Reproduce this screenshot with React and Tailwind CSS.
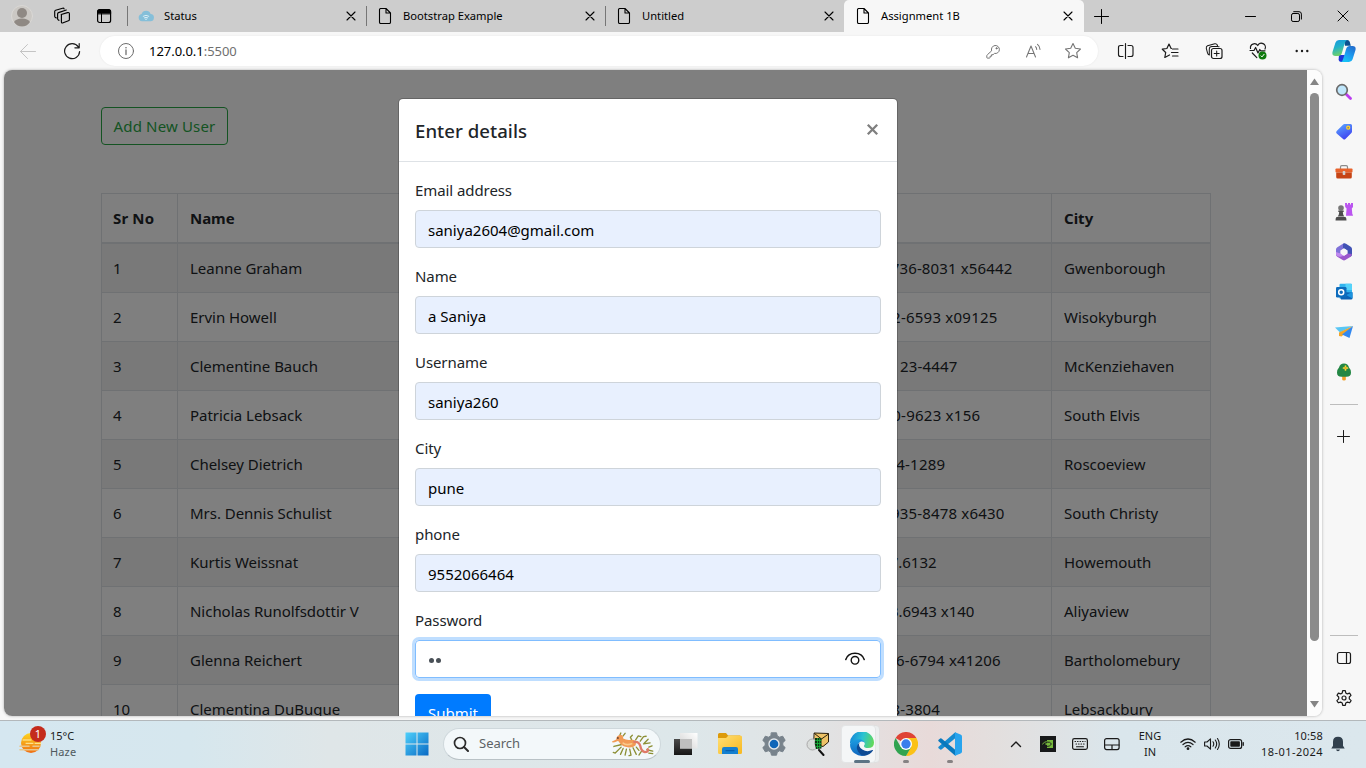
import React from "react";

const users = [
  ["1", "Leanne Graham", "1-770-736-8031 x56442", "Gwenborough", "pl-[15px] tracking-[0.13px]"],
  ["2", "Ervin Howell", "010-692-6593 x09125", "Wisokyburgh", "tracking-[0.23px]"],
  ["3", "Clementine Bauch", "1-463-123-4447", "McKenziehaven", "pl-[15px] tracking-[0.19px]"],
  ["4", "Patricia Lebsack", "493-170-9623 x156", "South Elvis", "tracking-[0.25px]"],
  ["5", "Chelsey Dietrich", "(254)954-1289", "Roscoeview", "tracking-[0.2px]"],
  ["6", "Mrs. Dennis Schulist", "1-477-935-8478 x6430", "South Christy", "pl-[15px] tracking-[0.17px]"],
  ["7", "Kurtis Weissnat", "210.067.6132", "Howemouth", "tracking-[-0.03px]"],
  ["8", "Nicholas Runolfsdottir V", "586.493.6943 x140", "Aliyaview", "tracking-[0px]"],
  ["9", "Glenna Reichert", "(775)976-6794 x41206", "Bartholomebury", "tracking-[0.17px]"],
  ["10", "Clementina DuBuque", "024-648-3804", "Lebsackbury", "tracking-[0.13px]"],
];

const fields = [
  ["Email address", "saniya2604@gmail.com"],
  ["Name", "a Saniya"],
  ["Username", "saniya260"],
  ["City", "pune"],
  ["phone", "9552066464"],
];

function Icon({ className = "size-4", box = "0 0 16 16", children }) {
  return (
    <svg className={`shrink-0 ${className}`} viewBox={box} fill="none" stroke="currentColor" strokeWidth="1" strokeLinecap="round" strokeLinejoin="round">
      {children}
    </svg>
  );
}

const CloseX = () => (
  <Icon className="size-2.5 text-black" box="0 0 10 10">
    <path d="M1 1l8 8M9 1l-8 8" strokeWidth="1.1" />
  </Icon>
);

const PageIcon = () => (
  <Icon className="size-4 text-black">
    <path d="M3.8.5H9l4.5 4.5v9.200a1.300 1.300 0 0 1-1.300 1.300H3.800a1.300 1.300 0 0 1-1.300-1.300V1.800A1.300 1.300 0 0 1 3.800.5zM9 .7V5h4.300" strokeWidth="1.100" />
  </Icon>
);

const CloudIcon = () => (
  <Icon className="size-4">
    <path d="M4 13.200a3.700 3.700 0 0 1-.4-7.300A4.800 4.800 0 0 1 12.600 6 3.600 3.600 0 0 1 12 13.200z" fill="#85bfd9" stroke="none" />
    <path d="M5.200 8.200q2.800-2 5.600 0M6.300 9.800q1.700-1.200 3.400 0" stroke="#d9edf5" />
    <circle cx="8" cy="11.300" r=".8" fill="#d9edf5" stroke="none" />
  </Icon>
);

function Tab({ title, icon, active }) {
  return (
    <div className={`flex items-center ${active ? "h-8 w-[240px] rounded-t-[5px] bg-[#f7f7f7] pl-[11px]" : "h-5 w-[239px] border-l border-[#767676] pl-[10px]"}`}>
      {icon}
      <span className="ml-[10px] flex-1 text-[11.200px] text-black">{title}</span>
      <CloseX />
      <span className={active ? "w-[11px]" : "w-[10px]"} />
    </div>
  );
}

function TabStrip() {
  return (
    <div className="flex h-8 items-center bg-[#cdcdcd]">
      <div className="flex w-[127px] items-center pl-[11px]">
        <Icon className="size-[22px]" box="0 0 22 22">
          <circle cx="11" cy="11" r="10.500" fill="#cbc8c4" stroke="#dad8d5" />
          <circle cx="11" cy="8" r="5" fill="#8f8984" stroke="none" />
          <path d="M3 17q2-3.500 8-3.500t8 3.500q-3 4.500-8 4.500T3 17z" fill="#8f8984" stroke="none" />
        </Icon>
        <Icon className="ml-5 size-[18px] text-black" box="0 0 18 18">
          <path d="M8.200 7.500l6.300-1.900q1.900-.5 1.900 1.200v5.600q0 1-1 1.400l-5.200 2q-1.800.7-1.800-1V8.600q0-.9 0-1.100zM5.900 13.300l-.8-.6q-.5-.4-.5-1V6.900q0-.9.900-1.300L13.300 3M3.300 11l-1.100-.8q-.5-.4-.5-1V4.400q0-.9.900-1.200L9.600 1.200q1.200-.3 1.500.7" strokeWidth="1.150" />
        </Icon>
        <Icon className="ml-[25px] size-4 text-black">
          <rect x="1.600" y="1.700" width="13" height="12.800" rx="2" strokeWidth="1.200" />
          <path d="M1.600 5.500V3.700q0-2 2-2h9q2 0 2 2v1.800z" fill="currentColor" />
          <path d="M5.500 5v9.500" />
        </Icon>
      </div>
      <Tab title="Status" icon={<CloudIcon />} />
      <Tab title="Bootstrap Example" icon={<PageIcon />} />
      <Tab title="Untitled" icon={<PageIcon />} />
      <Tab title="Assignment 1B" icon={<PageIcon />} active />
      <Icon className="ml-[10px] size-[15px] text-black" box="0 0 15 15">
        <path d="M7.500.5v14M.5 7.500h14" />
      </Icon>
      <div className="ml-auto flex items-center gap-[35px] pr-[17px] text-black">
        <Icon className="size-[11px]" box="0 0 11 11"><path d="M.5 5.500h10" /></Icon>
        <Icon className="size-[11px]" box="0 0 11 11">
          <rect x=".5" y="2.500" width="8" height="8" rx="1.600" />
          <path d="M2.700.7H8q2.400 0 2.400 2.400v5" />
        </Icon>
        <Icon className="size-[12px]" box="0 0 12 12"><path d="M1 1l10 10M11 1L1 11" /></Icon>
      </div>
    </div>
  );
}

const Copilot = () => (
  <Icon className="size-6" box="0 0 24 24">
    <defs>
      <linearGradient id="cpA" x1="0" y1="0" x2=".3" y2="1"><stop offset="0" stopColor="#1596e0" /><stop offset=".5" stopColor="#22b2c9" /><stop offset="1" stopColor="#6fd06a" /></linearGradient>
      <linearGradient id="cpB" x1="1" y1="0" x2=".4" y2="1"><stop offset="0" stopColor="#2366c8" /><stop offset=".6" stopColor="#1c9bf0" /><stop offset="1" stopColor="#18c2f5" /></linearGradient>
    </defs>
    <path d="M12 1h3.200q2 0 2.600 2l1 3.700H13z" fill="#0a4f8f" stroke="none" />
    <path d="M7 16h6l-1.500 7H9.300q-2 0-2.700-2z" fill="#1f35d8" stroke="none" />
    <path d="M7 1h8q-1.800 1-2.500 4l-2.600 9q-.8 3-3.700 3H3.400Q-.3 17 .5 13L3.400 3.800Q4.300 1 7 1z" fill="url(#cpA)" stroke="none" />
    <path d="M17 23H9q1.800-1 2.500-4l2.600-9q.8-3 3.700-3h2.800q3.700 0 2.900 4l-2.900 9.200Q19.700 23 17 23z" fill="url(#cpB)" stroke="none" />
  </Icon>
);

function Toolbar() {
  return (
    <div className="flex h-[38px] items-center bg-[#f7f7f7]">
      <div className="flex w-[100px] items-center pl-[19px]">
        <Icon className="size-[18px] text-[#c4c4c4]" box="0 0 18 18">
          <path d="M16.500 9.500H1.500M8.500 2.500l-7 7 7 7" />
        </Icon>
        <Icon className="ml-[26px] size-[18px] text-[#1b1b1b]" box="0 0 18 18">
          <path d="M15.300 4.900A7.500 7.500 0 1 0 16.600 9.500M16.200 1.500v4.300h-4.300" strokeWidth="1.200" />
        </Icon>
      </div>
      <div className="flex h-[30px] w-[998px] items-center rounded-full bg-white pl-[17px] shadow-[0_0_2px_rgba(0,0,0,.08)]">
        <Icon className="size-[18px] text-[#6e6e6e]" box="0 0 18 18">
          <circle cx="9" cy="9" r="7.500" />
          <path d="M9 8v4.500" strokeWidth="1.300" /><circle cx="9" cy="5.700" r=".8" fill="currentColor" stroke="none" />
        </Icon>
        <span className="ml-[14px] flex-1 pt-px text-[13px] tracking-[-0.04px] text-black">127.0.0.1<span className="text-[#6f6f6f]">:5500</span></span>
        <div className="flex items-center gap-[22px] pr-4 text-[#757575]">
          <Icon className="size-[18px]" box="0 0 18 18">
            <path d="M7.500 8.500a4 4 0 1 1 3 2.900l-1.400 1.300H7.600v1.500H6.100v1.300q-.1.500-.6.600H3.400q-.6 0-.6-.6v-1.800q0-.4.300-.7z" />
            <circle cx="12.500" cy="6.300" r=".6" fill="currentColor" />
          </Icon>
          <Icon className="size-[18px]" box="0 0 18 18">
            <path d="M2.500 15L7 4l4.500 11M4 11.500h6M11.500 4.700q1.100 1 1.200 2.800M13.500 2.300q2.300 1.700 2.500 5.100" strokeWidth="1.050" />
          </Icon>
          <Icon className="size-[18px]" box="0 0 18 18">
            <path d="M9 1.600l2.300 4.700 5.200.7-3.800 3.600.9 5.200L9 13.300l-4.600 2.500.9-5.200L1.500 7l5.200-.7z" strokeWidth="1.100" />
          </Icon>
        </div>
      </div>
      <div className="ml-[19px] flex items-center gap-[26px] text-[#1b1b1b]">
        <Icon className="size-[18px]" box="0 0 18 18">
          <path d="M8.500 1.500v15M6 3.500H3.500q-2 0-2 2v7q0 2 2 2H6M11 3.500h3q2 0 2 2v7q0 2-2 2h-3" strokeWidth="1.150" />
        </Icon>
        <Icon className="size-[18px]" box="0 0 18 18">
          <path d="M10.500 6.500h-.4L8 2 5.900 6.500l-4.600.7L4.700 10.500l-.9 5L8.500 13M11.500 7h5.500M10.500 10.500H17M11.500 14H17" strokeWidth="1.200" />
        </Icon>
        <Icon className="size-[18px]" box="0 0 18 18">
          <rect x="6.500" y="6.500" width="10.500" height="10" rx="2" strokeWidth="1.200" />
          <path d="M11.700 9v5M9.200 11.500h5M4.300 12.900Q3 12.600 2.500 10.800L1.300 6.300Q1 4.500 2.500 3.800l7.300-2Q11.600 1.500 12.300 3l.2.8M4.300 12.900V7.200q0-2.700 2.700-2.700h5.500q1 0 1.500.3" strokeWidth="1.050" />
        </Icon>
        <Icon className="size-[18px]" box="0 0 18 18">
          <path d="M1.500 6.500A4 4 0 0 1 8.700 3.500a4 4 0 0 1 7.300 3.500M3.300 11l4.500 4.600M1 8.500h4l1.600-3 2.400 5.500 1.800-3.500 1 1.300H16" strokeWidth="1.200" />
          <circle cx="13.500" cy="13.500" r="4" fill="#0e7a0d" stroke="none" />
          <path d="M12 13.900l1 1 2.100-2.600" stroke="#fff" />
        </Icon>
        <Icon className="size-[18px]" box="0 0 18 18">
          <g fill="currentColor" stroke="none"><circle cx="3.700" cy="9" r="1.200" /><circle cx="9" cy="9" r="1.200" /><circle cx="14.300" cy="9" r="1.200" /></g>
        </Icon>
      </div>
      <div className="ml-auto pr-[10px]"><Copilot /></div>
    </div>
  );
}

const cols = "grid grid-cols-[77px_273px_380px_221px_159px]";

function Row({ cells, head, odd }) {
  const base = head
    ? "h-[50px] border-r border-b-2 border-[#dee2e6] px-3 pt-3 leading-6 font-bold"
    : "h-[49px] border-r border-b border-[#dee2e6] px-3 pt-3 leading-6";
  return (
    <div className={`${cols} ${odd ? "bg-[#f2f2f2]" : ""}`}>
      <div className={`${base} border-l pl-[11px] ${head ? "tracking-[0.15px]" : ""}`}>{cells[0]}</div>
      <div className={`${base} tracking-[-0.03px]`}>{cells[1]}</div>
      <div className={base} />
      <div className={`${base} ${cells[4] || ""}`}>{cells[2]}</div>
      <div className={base}>{cells[3]}</div>
    </div>
  );
}

function Page() {
  return (
    <div className="h-full w-[1303px] overflow-hidden bg-white pt-[37px] pl-[97px] text-[15px] whitespace-nowrap text-[#212529]">
      <button className="h-[38px] w-[127px] rounded border border-[#28a745] text-center text-[15px] tracking-[0.16px] text-[#28a745]">Add New User</button>
      <div className="mt-12 w-[1110px]">
        <div className="border-t border-[#dee2e6]"><Row head cells={["Sr No", "Name", "Phone", "City"]} /></div>
        {users.map((u, i) => <Row key={u[0]} cells={u} odd={i % 2 === 0} />)}
      </div>
    </div>
  );
}

function Modal() {
  return (
    <div className="absolute top-7 left-[394px] w-[500px] rounded-[5px] border border-black/20 bg-white bg-clip-padding text-[15px] text-[#212529]">
      <div className="flex h-[63px] items-center justify-between border-b border-[#dee2e6] px-4">
        <h5 className="pt-px text-[18.600px] font-medium tracking-[0.04px]">Enter details</h5>
        <Icon className="mr-[2px] mb-px size-[13px] text-[#7f7f7f]" box="0 0 13 13"><path d="M1.800 1.800l9.400 9.400M11.200 1.800l-9.400 9.400" strokeWidth="2.300" strokeLinecap="butt" /></Icon>
      </div>
      <div className="flex flex-col gap-4 p-4">
        {fields.map(([label, value]) => (
          <div key={label}>
            <label className="mb-2 block leading-6 tracking-[-0.08px]">{label}</label>
            <div className="flex h-[38px] items-center rounded border border-[#ced4da] bg-[#e8f0fe] px-3 pt-[2px] text-black">{value}</div>
          </div>
        ))}
        <div>
          <label className="mb-2 block leading-6 tracking-[-0.08px]">Password</label>
          <div className="flex h-[38px] items-center gap-[2px] rounded border border-[#80bdff] px-[13px] shadow-[0_0_0_3px_#bfdeff]">
            <span className="mt-[3px] size-[5px] rounded-full bg-[#495057]" />
            <span className="mt-[3px] size-[5px] rounded-full bg-[#495057]" />
            <Icon className="mr-[2px] ml-auto h-4 w-5 text-[#111]" box="0 0 20 16">
              <path d="M.8 8.500Q2.800 2.200 10 2.200t9.200 6.300" strokeWidth="1.500" />
              <circle cx="10" cy="9.300" r="3.800" strokeWidth="1.400" />
            </Icon>
          </div>
        </div>
        <button className="h-[38px] w-[76px] rounded bg-[#007bff] text-center text-white">Submit</button>
      </div>
    </div>
  );
}

function Scrollbar() {
  return (
    <div className="flex w-[15px] flex-col items-center bg-[#fcfcfc] pt-2">
      <Icon className="h-[7px] w-[9px] text-[#858585]" box="0 0 9 7"><path d="M4.500.5L9 7H0z" fill="currentColor" stroke="none" /></Icon>
      <div className="mt-2 h-[548px] w-[9px] rounded-full bg-[#8b8b8b]" />
      <Icon className="mt-[60px] h-[7px] w-[9px] text-[#858585]" box="0 0 9 7"><path d="M0 0h9L4.500 6.500z" fill="currentColor" stroke="none" /></Icon>
    </div>
  );
}

const SideItem = ({ children }) => <div className="flex h-10 items-center justify-center text-[#1b1b1b]">{children}</div>;

function Sidebar() {
  return (
    <div className="flex h-full flex-1 flex-col pt-[2px] pr-px">
      <SideItem>
        <Icon className="size-[18px]" box="0 0 18 18">
          <path d="M11.500 11.500l4 4" stroke="#bb3cf0" strokeWidth="2.800" />
          <circle cx="7" cy="7" r="5.300" fill="#bfe6fb" stroke="#6b6b6b" strokeWidth="1.700" />
        </Icon>
      </SideItem>
      <SideItem>
        <Icon className="size-[18px]" box="0 0 18 18">
          <defs><linearGradient id="tag" x1=".2" y1="0" x2=".7" y2="1"><stop offset="0" stopColor="#5ba4ff" /><stop offset="1" stopColor="#3c3df0" /></linearGradient></defs>
          <path d="M9.500 1h6q1.500 0 1.500 1.500v6q0 .8-.6 1.400l-6 6.200q-1.200 1-2.300 0L1.700 10.500q-1.200-1.200 0-2.400L8 1.700Q8.700 1 9.500 1z" fill="url(#tag)" stroke="none" />
          <circle cx="13.200" cy="4.700" r="1.500" fill="#9a8455" stroke="#ffd42e" strokeWidth="1.200" />
        </Icon>
      </SideItem>
      <SideItem>
        <Icon className="size-[18px]" box="0 0 18 18">
          <path d="M5.500 6V4q0-1.300 1.300-1.300h4.400q1.300 0 1.300 1.300v2" stroke="#8b8b8b" strokeWidth="1.200" />
          <rect x=".5" y="5.500" width="17" height="4" rx=".8" fill="#e8622b" stroke="none" />
          <path d="M1.200 9.500h15.600V14q0 1.500-1.500 1.500H2.700q-1.500 0-1.500-1.500z" fill="#c64415" stroke="none" />
          <rect x="7.700" y="8" width="2.600" height="4" rx=".8" fill="#d2d2d2" stroke="none" />
        </Icon>
      </SideItem>
      <SideItem>
        <Icon className="size-[18px]" box="0 0 18 18">
          <path d="M10 0h2v1.500h1V0h2v1.500h1V0h2v4l-1.200 1.500.5 5.500q.7.500.7 1.800h-7l.6-7.300L10.200 4z" fill="#bb55f0" stroke="none" />
          <circle cx="6" cy="5" r="2.800" fill="#777" stroke="none" />
          <path d="M3.300 7.500h5.400v1.500H7.800q.2 3.500 1.600 4.500H2.600Q4 12.500 4.200 9h-.9zM1.500 14h9q1 .8 1 3.500H.5q0-2.700 1-3.500z" fill="#4d4d4d" stroke="none" />
        </Icon>
      </SideItem>
      <SideItem>
        <Icon className="size-[18px]" box="0 0 18 18">
          <path d="M8 .8L2.300 4.200Q1 5 1 6.500v5l4.500 2.200V7.500L11 4.200V1.500Q9.500 0 8 .8z" fill="#7f72d8" stroke="none" />
          <path d="M8 .8q1.500-.9 3 0l4.700 3Q17 4.600 17 6.100v5.400q0 1.500-1.300 2.300L12.500 12V7.500L8 4.700z" fill="#4152b5" stroke="none" />
          <path d="M1 11.500q0 1.500 1.300 2.300l5.400 3.300q1.300.7 2.600 0l5.400-3.300L17 11l-4.500-.5L9 12.700l-3.500-2z" fill="#9b58cc" stroke="none" />
          <path d="M1 9v2.500q1 2.500 4.500 2.200L9 12.700 5.500 10.500z" fill="#c089ef" stroke="none" />
          <path d="M9 5.500l3.300 1.900v3.400L9 12.700l-3.300-1.900V7.400z" fill="#f7f7f7" stroke="none" />
        </Icon>
      </SideItem>
      <SideItem>
        <Icon className="size-[18px]" box="0 0 18 18">
          <rect x="4.500" y=".8" width="12.500" height="15" rx="1" fill="#32b4ee" stroke="none" />
          <path d="M10.500.8H16q1 0 1 1V7h-6.500z" fill="#55d3fa" stroke="none" />
          <path d="M4.500 9l13 .500V15q0 1.500-1.500 1.500H6z" fill="#0c63b5" stroke="none" />
          <path d="M17.500 9v6.500L11 12z" fill="#1c94df" stroke="none" />
          <rect x="1" y="4" width="10.500" height="10.500" rx="1.200" fill="#0d6cbd" stroke="none" />
          <circle cx="6.200" cy="9.200" r="2.500" stroke="#fff" strokeWidth="1.500" />
        </Icon>
      </SideItem>
      <SideItem>
        <Icon className="size-[18px]" box="0 0 18 18">
          <path d="M0 4.500L18 3l-13 6.500z" fill="#59c6f4" stroke="none" />
          <path d="M4 9.500L18 3 6.500 13.500 4 13z" fill="#f2a62a" stroke="none" />
          <path d="M18 3l-3.500 12L7 11.500z" fill="#3288ef" stroke="none" />
        </Icon>
      </SideItem>
      <SideItem>
        <Icon className="size-[18px]" box="0 0 18 18">
          <path d="M7.200 12h3.600v4.500q0 1-1.800 1t-1.800-1z" fill="#f1a02a" stroke="none" />
          <path d="M9 .5q4 0 5 4 2 2 2 5 0 4.300-4.500 4.300h-5Q2 13.800 2 9.500q0-3 2-5 1-4 5-4z" fill="#238744" stroke="none" />
          <path d="M10.500 3v4M8.500 5h4" stroke="#f8d734" strokeWidth="1.700" /><circle cx="10.500" cy="5" r=".8" fill="#e68a1e" stroke="none" />
        </Icon>
      </SideItem>
      <div className="mx-auto mt-3 mb-[11px] h-px w-7 bg-[#bdbdbd]" />
      <SideItem><Icon className="size-[13px]" box="0 0 13 13"><path d="M6.500.5v12M.5 6.500h12" /></Icon></SideItem>
      <div className="mx-auto mt-auto mb-[2px] h-px w-7 bg-[#bdbdbd]" />
      <SideItem>
        <Icon><rect x="1.500" y="2.500" width="13" height="11" rx="2" strokeWidth="1.200" /><path d="M10.500 2.500v11" strokeWidth="1.200" /></Icon>
      </SideItem>
      <SideItem>
        <Icon className="size-[18px]" box="0 0 18 18">
          <path d="M7.700 1.700h2.600l.5 2.300 1.500.9 2.300-.8 1.400 2.200-1.700 1.700v1.900l1.800 1.700-1.400 2.200-2.300-.7-1.600.9-.5 2.300H7.700l-.5-2.300-1.600-.9-2.300.7-1.400-2.200 1.800-1.700V8L2 6.300l1.400-2.200 2.300.8 1.500-.9z" strokeWidth="1.200" />
          <circle cx="9" cy="9" r="2" strokeWidth="1.200" />
        </Icon>
      </SideItem>
      <div className="h-[2px]" />
    </div>
  );
}

const AppButton = ({ children, dot }) => (
  <div className="flex h-full w-11 flex-col items-center pt-[11px]">
    {children}
    {dot && <span className="mt-1 h-[3px] w-[6px] rounded-full bg-[#868283]" />}
  </div>
);

const SeaDragon = () => (
  <Icon className="h-[25px] w-[44px]" box="-2 -2 132 76">
    <g stroke="#8c8f35" strokeWidth="4">
      <path d="M24 8l3-7M34 10l6-8M60 22l-4-8 6-6M72 22l8-12 8 2M86 26l10-14 8-1M98 32l12-12M96 34l20-3M30 36L6 42M28 44L10 62l-6-2M34 48L26 66M44 50l-4 18M54 50l4 18-6 2M64 46l10 20M112 44l10-4M106 52l18 4M112 62l12 2M90 56l-8 12M74 44l8 10" />
    </g>
    <path d="M0 27l13-6q0-14 14-15 8 2 7 12 10 5 20 4 12-1 20 4l-2 12q-10 9-24 6-16-1-24-12-4-8-8-6-8 4-14 4z" fill="#f19a55" stroke="none" />
    <path d="M34 32q10 8 26 2" stroke="#f9c98a" strokeWidth="5" />
    <path d="M68 28q14-2 18 12 3 17 14 19 12 0 9-9" stroke="#df7a68" strokeWidth="7" />
    <circle cx="18" cy="16" r="3" fill="#6b4736" stroke="none" />
  </Icon>
);

function Taskbar() {
  return (
    <div className="flex h-12 items-center border-t border-[#b3b8bb] bg-[linear-gradient(90deg,#d5e7f0_0%,#d6e7ee_14%,#dfe6e8_24%,#dde7ea_50%,#e1e3e4_60%,#e8dad9_68%,#e3dfde_73%,#dae6ec_82%,#dbe7ed_100%)] text-[#1a1a1a]">
      <div className="flex w-[394px] items-center pb-[2px] pl-[18px]">
        <div className="relative">
          <Icon className="size-[28px]" box="0 0 28 28">
            <defs><linearGradient id="sun" x1="0" y1="0" x2="0" y2="1"><stop offset="0" stopColor="#fdd51f" /><stop offset="1" stopColor="#ef6e13" /></linearGradient></defs>
            <circle cx="13" cy="13" r="10" fill="url(#sun)" stroke="none" />
            <path d="M5 10h8M8 13.300h7M17 13.300h6" stroke="#fff0a8" strokeWidth="1" />
            <path d="M2 16.300h9M15 16.300h6M2 19.800h18" stroke="#e9c68c" strokeWidth="1.600" />
          </Icon>
          <span className="absolute -top-[4px] left-[12px] flex size-4 items-center justify-center rounded-full bg-[#c42b1c] text-[11px] leading-none text-white">1</span>
        </div>
        <div className="ml-1 text-[11px] leading-4">
          <div>15°C</div>
          <div className="tracking-[0.15px] text-[#50595e]">Haze</div>
        </div>
      </div>
      <div className="flex w-[49px] justify-center pr-[3px] pb-[2px]">
        <Icon className="size-6" box="0 0 24 24">
          <defs><linearGradient id="win" x1="0" y1="0" x2="1" y2="1"><stop offset="0" stopColor="#4fd0fb" /><stop offset="1" stopColor="#0869c4" /></linearGradient></defs>
          <path d="M.5.500H11.500V11.500H.5zM12.500.500h11v11h-11zM.5 12.500h11v11H.5zM12.500 12.500h11v11h-11z" fill="url(#win)" stroke="none" />
        </Icon>
      </div>
      <div className="mb-px flex h-8 w-[218px] items-center rounded-full border border-[#cfd8dc] border-b-[#b9c2c6] bg-[#f3f8fa] pr-[5px] pl-[9px]">
        <Icon className="size-4 text-[#2b2b2b]"><circle cx="7" cy="7" r="5.500" strokeWidth="1.700" /><path d="M11 11l4 4" strokeWidth="2" /></Icon>
        <span className="ml-[10px] flex-1 text-[13px] text-[#5d6265]">Search</span>
        <SeaDragon />
      </div>
      <div className="ml-[3px] flex h-full">
        <AppButton>
          <Icon className="size-6" box="0 0 24 24">
            <defs>
              <linearGradient id="tvA" x1="0" y1="0" x2="0" y2="1"><stop offset="0" stopColor="#4b4b4b" /><stop offset="1" stopColor="#161616" /></linearGradient>
              <linearGradient id="tvB" x1="1" y1="0" x2="0" y2="1"><stop offset="0" stopColor="#fff" /><stop offset="1" stopColor="#d2d2d2" /></linearGradient>
            </defs>
            <path d="M0 7h18v16H0z" fill="url(#tvA)" stroke="none" />
            <path d="M6 1h17.500v15.500H6z" fill="url(#tvB)" stroke="none" />
            <path d="M6 7h12v9.500H6z" fill="#bfbfbf" stroke="none" />
          </Icon>
        </AppButton>
        <AppButton>
          <Icon className="size-6" box="0 0 24 24">
            <defs><linearGradient id="fo" x1="0" y1="0" x2="1" y2="1"><stop offset="0" stopColor="#ffdf75" /><stop offset="1" stopColor="#f7b81f" /></linearGradient></defs>
            <path d="M0 2.500Q0 1 1.500 1H8l2 2.500h12V8H0z" fill="#dd9a0a" stroke="none" />
            <path d="M0 6h8l2.500-2.500h12q1.500 0 1.500 1.500v15.500q0 1.500-1.500 1.500h-21Q0 22 0 20.500z" fill="url(#fo)" stroke="none" />
            <path d="M4 22v-5q0-2 2-2h12q2 0 2 2v5z" fill="#1580d0" stroke="none" /><path d="M8 18.700h8" stroke="#0a5fae" strokeWidth="1.200" />
          </Icon>
        </AppButton>
        <AppButton>
          <Icon className="size-6" box="0 0 24 24">
            <path d="M9.500.8h5l.8 3.200 2.200 1.200 3.200-1 2.500 4.200-2.400 2.300v2.600l2.400 2.300-2.500 4.200-3.200-1-2.200 1.300-.8 3.100h-5l-.8-3.100-2.200-1.300-3.200 1L.8 15.600l2.400-2.300v-2.600L.8 8.400l2.500-4.200 3.200 1L8.700 4z" fill="#78838c" stroke="#78838c" />
            <circle cx="12" cy="12" r="5.700" fill="#e5e9ec" stroke="none" /><circle cx="12" cy="12" r="4.300" fill="#1066b8" stroke="none" />
          </Icon>
        </AppButton>
        <AppButton>
          <Icon className="size-6" box="0 0 24 24">
            <path d="M8.500 1L22.500 1.500V10L17 14.500 8 12z" fill="#edc266" stroke="#2b210d" />
            <path d="M8.500 1.500l7 5.500 7-5" stroke="#2b210d" />
            <circle cx="6.500" cy="12.500" r="5.500" fill="#d9dcda" stroke="#aaa" />
            <path d="M9 6h6.500v10.500L10 17q-2-5-1-11z" fill="#0d3312" stroke="none" />
            <path d="M9.500 8.500h5.500M9.500 11.500h5.500M10 14.500h5M11.500 6.500v10M13.700 6.500v9.500" stroke="#19ba3c" strokeWidth=".8" />
            <path d="M13 18l4.500 5" stroke="#111" strokeWidth="2" />
          </Icon>
        </AppButton>
        <div className="relative flex h-full w-11 justify-center pt-[11px]">
          <span className="absolute top-1 left-[2px] h-[38px] w-[38px] rounded border border-[#dfdfdf] bg-[#eceeef]" />
          <span className="absolute top-1 left-[1px] h-[38px] w-[35px] rounded border border-[#e3e5e6] bg-[#f4f6f7]" />
          <Icon className="relative size-6" box="0 0 24 24">
            <defs>
              <linearGradient id="eA" x1="0" y1=".4" x2="1" y2=".6"><stop offset="0" stopColor="#1488d8" /><stop offset=".5" stopColor="#2bc3d2" /><stop offset="1" stopColor="#62d957" /></linearGradient>
              <linearGradient id="eB" x1="0" y1="0" x2="0" y2="1"><stop offset="0" stopColor="#1b9de2" /><stop offset="1" stopColor="#1165bd" /></linearGradient>
            </defs>
            <path d="M0 12A12 12 0 0 1 24 10.500q0 5.500-6 5.500-4 0-4-2 0-.6.800-1.700Q15 8.500 10.500 8 5 7.500 0 12z" fill="url(#eA)" stroke="none" />
            <path d="M0 12.500Q2.500 7.200 9 7.200q4.500 0 6 3.800-1.500-2-4-1.500-4.500 2-2.500 7.500 1.500 4.500 6.500 6.500Q9.500 25 4.500 21.300 0 18 0 12.500z" fill="url(#eB)" stroke="none" />
            <path d="M9.500 10.500Q5 15 8 19.500t7 4.200q5-.9 8-5.200.3-.8-.7-.5-5.300 2.500-10-.5-4.500-3-2.800-7z" fill="#0d4a94" stroke="none" />
          </Icon>
          <span className="absolute top-[39px] left-[14px] h-[3px] w-4 rounded-full bg-[#5b7384]" />
        </div>
        <AppButton dot>
          <Icon className="size-6" box="0 0 24 24">
            <path d="M12 12L1.600 6A12 12 0 0 1 22.400 6z" fill="#df4335" stroke="none" />
            <path d="M12 12V6h10.400A12 12 0 0 1 12 24l5-9z" fill="#fbc116" stroke="none" />
            <path d="M1.600 6A12 12 0 0 0 12 24l5.200-9L12 12 6.800 15z" fill="#31a350" stroke="none" />
            <circle cx="12" cy="12" r="6" fill="#fff" stroke="none" /><circle cx="12" cy="12" r="4.700" fill="#3b7ded" stroke="none" />
          </Icon>
        </AppButton>
        <AppButton dot>
          <Icon className="size-6" box="0 0 24 24">
            <path d="M17.500 0v6L3.500 17.500l-1 .2L.3 16V15z" fill="#168bd0" stroke="none" />
            <path d="M17.500 24v-6L3.500 6.500l-1-.2L.3 8V9z" fill="#0878bd" stroke="none" />
            <path d="M17 .2L22.500 2.500Q24 3.200 24 4.500v15q0 1.300-1.500 2L17 23.800z" fill="#28a4ee" stroke="none" />
          </Icon>
        </AppButton>
      </div>
      <div className="ml-auto flex items-center pb-[2px]">
        <Icon className="h-3 w-3" box="0 0 12 12"><path d="M1.500 8.500L6 4l4.500 4.500" strokeWidth="1.400" /></Icon>
        <Icon className="ml-[18px] size-4">
          <path d="M0 0h16v16H0z" fill="#17191a" stroke="none" />
          <path d="M7 4h6v8H7z" fill="#76b93c" stroke="none" />
          <path d="M2.500 8q4-4.500 8-1Q8.500 10.500 5.500 8q1-1.500 2.500 0" stroke="#76b93c" />
          <path d="M7 6q3-.5 4.500 2-2 3-4.500 2.500" stroke="#17191a" strokeWidth=".9" />
        </Icon>
        <Icon className="ml-4 size-4">
          <rect x=".6" y="2.600" width="14.800" height="10.800" rx="1.800" strokeWidth="1.200" />
          <path d="M3 5.500h.6M5.500 5.500h.6M8 5.500h.6M10.500 5.500h.6M13 5.500h.1M4 8h.6M6.500 8h.6M9 8h.6M11.500 8h.6M4.500 10.800h7" strokeWidth="1.100" />
        </Icon>
        <Icon className="ml-4 size-4"><rect x=".6" y="2.600" width="14.500" height="11" rx="2" strokeWidth="1.200" /><path d="M.6 9h14.500M8 9v4.500" strokeWidth="1.200" /></Icon>
        <div className="ml-[10px] w-[40px] text-center text-[11px] leading-4">ENG<br />IN</div>
        <Icon className="ml-[10px] size-4">
          <path d="M.8 6.200q7.200-6.400 14.400 0M3 8.500q5-4.200 10 0M5.200 10.800q2.800-2.200 5.600 0" strokeWidth="1.200" />
          <circle cx="8" cy="12.700" r="1.400" fill="currentColor" stroke="none" />
        </Icon>
        <Icon className="ml-2 size-4">
          <path d="M.6 6H3l3.500-3.200v10.400L3 10H.6zM9 5.800q1.500 2.200 0 4.400M11.300 4q2.800 4 0 8M13.500 2.500q3.600 5.500 0 11" strokeWidth="1.100" />
        </Icon>
        <Icon className="ml-2 size-4">
          <rect x=".6" y="3.600" width="13" height="8.800" rx="2" strokeWidth="1.200" /><rect x="2.300" y="5.300" width="9.600" height="5.400" rx=".8" fill="currentColor" stroke="none" /><path d="M15.200 6.700v2.600" strokeWidth="1.400" />
        </Icon>
        <div className="ml-3 w-[67px] text-right text-[11px] leading-4 whitespace-nowrap"><div className="tracking-[0.15px]">10:58</div><div className="tracking-[0.45px]">18-01-2024</div></div>
        <Icon className="mr-5 ml-[7px] size-4 text-[#31404d]">
          <path d="M8 .8q5 0 5 5v4l1.700 2.600H1.300L3 9.800v-4q0-5 5-5zM6 13.500h4q-.5 1.700-2 1.700t-2-1.700z" fill="currentColor" stroke="none" />
        </Icon>
      </div>
    </div>
  );
}

export default function App() {
  return (
    <div className="h-[768px] w-[1366px] overflow-hidden bg-[#f7f7f7] font-['Noto_Sans','Open_Sans',sans-serif]">
      <TabStrip />
      <Toolbar />
      <div className="flex h-[650px] pl-1">
        <div className="relative flex h-[646px] w-[1318px] overflow-hidden rounded-lg shadow-[0_0_3px_rgba(0,0,0,.3)]">
          <div className="relative h-full">
            <Page />
            <div className="absolute inset-0 bg-black/50" />
          </div>
          <Scrollbar />
          <Modal />
        </div>
        <Sidebar />
      </div>
      <Taskbar />
    </div>
  );
}
